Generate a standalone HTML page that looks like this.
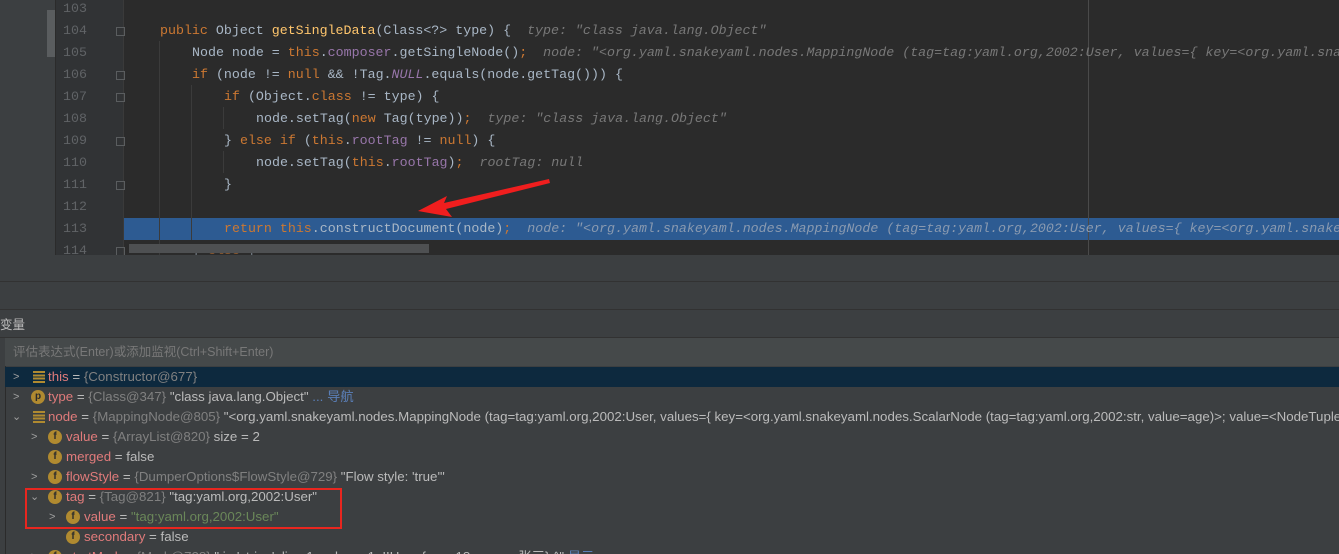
<!DOCTYPE html>
<html><head><meta charset="utf-8"><style>
*{margin:0;padding:0;box-sizing:border-box}
html,body{width:1339px;height:554px;overflow:hidden}
body{background:#3c3f41;position:relative;font-family:"Liberation Sans","Noto Sans CJK SC",sans-serif}
.ab{position:absolute}
#ed{left:0;top:0;width:1339px;height:255px;background:#2b2b2b;overflow:hidden}
.ln{position:absolute;left:57px;width:30px;text-align:right;font:13.3px/22px "Liberation Mono",monospace;color:#606366}
.cl{position:absolute;white-space:pre;font:13.3px/22px "Liberation Mono",monospace;color:#a9b7c6}
.k{color:#cc7832}.f{color:#ffc66d}.p{color:#9876aa}.h{color:#787878;font-style:italic}.i{color:#9876aa;font-style:italic}
.fold{position:absolute;left:116px;width:9px;height:9px;border:1px solid #5a5d5f}
.row{position:absolute;left:0;height:20px;width:1339px;font-size:13.3px;line-height:20px;white-space:nowrap;color:#bbbbbb}
.ar{position:absolute;color:#a0a0a0;font-size:11px}
.ic{position:absolute;width:14px;height:14px;border-radius:50%;background:#b08a30;color:#2b2b2b;font-size:10px;line-height:14px;text-align:center;top:3px;font-weight:bold}
.nm{color:#e07b7b}.g{color:#808080}.s{color:#6a8759}.lk{color:#5a7fb8}
.lst{position:absolute;top:4px;width:12px;height:12px;background:repeating-linear-gradient(#b08a30 0 2px,transparent 2px 3.3px)}
</style></head><body>
<div id="ed" class="ab">
<div class="ab" style="left:0;top:0;width:55px;height:255px;background:#3c3f41"></div>
<div class="ab" style="left:47px;top:10px;width:8px;height:47px;background:#5a5d5f"></div>
<div class="ab" style="left:56px;top:0;width:67px;height:255px;background:#313335"></div>
<div class="ab" style="left:123px;top:218px;width:1216px;height:22px;background:#2d5b92"></div>
<div class="ab" style="left:1088px;top:0;width:1px;height:255px;background:#4a4a4a"></div>
<div class="ab" style="left:159px;top:41px;width:1px;height:214px;background:#3b3b3b"></div>
<div class="ab" style="left:191px;top:85px;width:1px;height:155px;background:#3b3b3b"></div>
<div class="ab" style="left:223px;top:107px;width:1px;height:22px;background:#3b3b3b"></div>
<div class="ab" style="left:223px;top:151px;width:1px;height:22px;background:#3b3b3b"></div>
<div class="ab" style="left:123px;top:0;width:1px;height:255px;background:#3a3a3a"></div>
<div class="ln" style="top:-2px">103</div><div class="ln" style="top:20px">104</div><div class="ln" style="top:42px">105</div><div class="ln" style="top:64px">106</div><div class="ln" style="top:86px">107</div><div class="ln" style="top:108px">108</div><div class="ln" style="top:130px">109</div><div class="ln" style="top:152px">110</div><div class="ln" style="top:174px">111</div><div class="ln" style="top:196px">112</div><div class="ln" style="top:218px">113</div><div class="ln" style="top:240px">114</div>
<div class="fold" style="top:27px"></div><div class="fold" style="top:71px"></div><div class="fold" style="top:93px"></div><div class="fold" style="top:137px"></div><div class="fold" style="top:181px"></div><div class="fold" style="top:247px"></div>
<div class="cl" style="left:160px;top:20px"><span class="k">public </span>Object <span class="f">getSingleData</span>(Class&lt;?&gt; type) {  <span class="h">type: "class java.lang.Object"</span></div>
<div class="cl" style="left:192px;top:42px">Node node = <span class="k">this</span>.<span class="p">composer</span>.getSingleNode()<span class="k">;</span>  <span class="h">node: "&lt;org.yaml.snakeyaml.nodes.MappingNode (tag=tag:yaml.org,2002:User, values={ key=&lt;org.yaml.snakeyaml</span></div>
<div class="cl" style="left:192px;top:64px"><span class="k">if </span>(node != <span class="k">null </span>&amp;&amp; !Tag.<span class="i">NULL</span>.equals(node.getTag())) {</div>
<div class="cl" style="left:224px;top:86px"><span class="k">if </span>(Object.<span class="k">class </span>!= type) {</div>
<div class="cl" style="left:256px;top:108px">node.setTag(<span class="k">new </span>Tag(type))<span class="k">;</span>  <span class="h">type: "class java.lang.Object"</span></div>
<div class="cl" style="left:224px;top:130px">} <span class="k">else if </span>(<span class="k">this</span>.<span class="p">rootTag </span>!= <span class="k">null</span>) {</div>
<div class="cl" style="left:256px;top:152px">node.setTag(<span class="k">this</span>.<span class="p">rootTag</span>)<span class="k">;</span>  <span class="h">rootTag: null</span></div>
<div class="cl" style="left:224px;top:174px">}</div>
<div class="cl" style="left:224px;top:218px"><span class="k">return this</span>.constructDocument(node)<span class="k">;</span>  <span class="h" style="color:#8a9ab0">node: "&lt;org.yaml.snakeyaml.nodes.MappingNode (tag=tag:yaml.org,2002:User, values={ key=&lt;org.yaml.snakeyaml.snak</span></div>
<div class="cl" style="left:192px;top:240px"><span style="opacity:.6">} <span class="k">else </span>{</span></div>
<div class="ab" style="left:129px;top:244px;width:300px;height:9px;background:#4e5052"></div>
<svg class="ab" style="left:0;top:0" width="600" height="255"><polygon points="418,211 447,196 444,203 549,179 550,183 446,209 452,217" fill="#f01e1e"/></svg>
</div>
<div class="ab" style="left:0;top:281px;width:1339px;height:1px;background:#323232"></div>
<div class="ab" style="left:0;top:309px;width:1339px;height:1px;background:#323232"></div>
<div class="ab" style="left:0;top:314px;font-size:12.5px;color:#bbb">变量</div>
<div class="ab" style="left:0;top:337px;width:1339px;height:1px;background:#323232"></div>
<div class="ab" style="left:5px;top:338px;width:1334px;height:28px;background:#45494a;font-size:12.5px;line-height:28px;color:#787878;padding-left:8px">评估表达式(Enter)或添加监视(Ctrl+Shift+Enter)</div>
<div class="ab" style="left:5px;top:366px;width:1px;height:188px;background:#2b2b2b"></div>
<div class="row" style="top:367px;left:5px;background:#0d293e"><span class="ar" style="left:8px">&gt;</span><span class="lst" style="left:28px"></span><span class="ab" style="left:43px"><span class="nm">this</span> = <span class="g">{Constructor@677}</span></span></div>
<div class="row" style="top:387px"><span class="ar" style="left:13px">&gt;</span><span class="ic" style="left:31px">p</span><span class="ab" style="left:48px"><span class="nm">type</span> = <span class="g">{Class@347}</span> "class java.lang.Object" <span class="lk">... 导航</span></span></div>
<div class="row" style="top:407px"><span class="ar" style="left:12px">⌄</span><span class="lst" style="left:33px"></span><span class="ab" style="left:48px"><span class="nm">node</span> = <span class="g">{MappingNode@805}</span> "&lt;org.yaml.snakeyaml.nodes.MappingNode (tag=tag:yaml.org,2002:User, values={ key=&lt;org.yaml.snakeyaml.nodes.ScalarNode (tag=tag:yaml.org,2002:str, value=age)&gt;; value=&lt;NodeTuple</span></div>
<div class="row" style="top:427px"><span class="ar" style="left:31px">&gt;</span><span class="ic" style="left:48px">f</span><span class="ab" style="left:66px"><span class="nm">value</span> = <span class="g">{ArrayList@820}</span>  size = 2</span></div>
<div class="row" style="top:447px"><span class="ic" style="left:48px">f</span><span class="ab" style="left:66px"><span class="nm">merged</span> = false</span></div>
<div class="row" style="top:467px"><span class="ar" style="left:31px">&gt;</span><span class="ic" style="left:48px">f</span><span class="ab" style="left:66px"><span class="nm">flowStyle</span> = <span class="g">{DumperOptions$FlowStyle@729}</span> "Flow style: 'true'"</span></div>
<div class="row" style="top:487px"><span class="ar" style="left:30px">⌄</span><span class="ic" style="left:48px">f</span><span class="ab" style="left:66px"><span class="nm">tag</span> = <span class="g">{Tag@821}</span> "tag:yaml.org,2002:User"</span></div>
<div class="row" style="top:507px"><span class="ar" style="left:49px">&gt;</span><span class="ic" style="left:66px">f</span><span class="ab" style="left:84px"><span class="nm">value</span> = <span class="s">"tag:yaml.org,2002:User"</span></span></div>
<div class="row" style="top:527px"><span class="ic" style="left:66px">f</span><span class="ab" style="left:84px"><span class="nm">secondary</span> = false</span></div>
<div class="row" style="top:547px"><span class="ar" style="left:31px">&gt;</span><span class="ic" style="left:48px">f</span><span class="ab" style="left:66px"><span class="nm">startMark</span> = <span class="g">{Mark@728}</span> " in 'string', line 1, column 1:     !!User {age: 18, name: 张三}     ^" <span class="lk">显示</span></span></div>
<div class="ab" style="left:25px;top:488px;width:317px;height:41px;border:2px solid #e8261f"></div>
</body></html>
